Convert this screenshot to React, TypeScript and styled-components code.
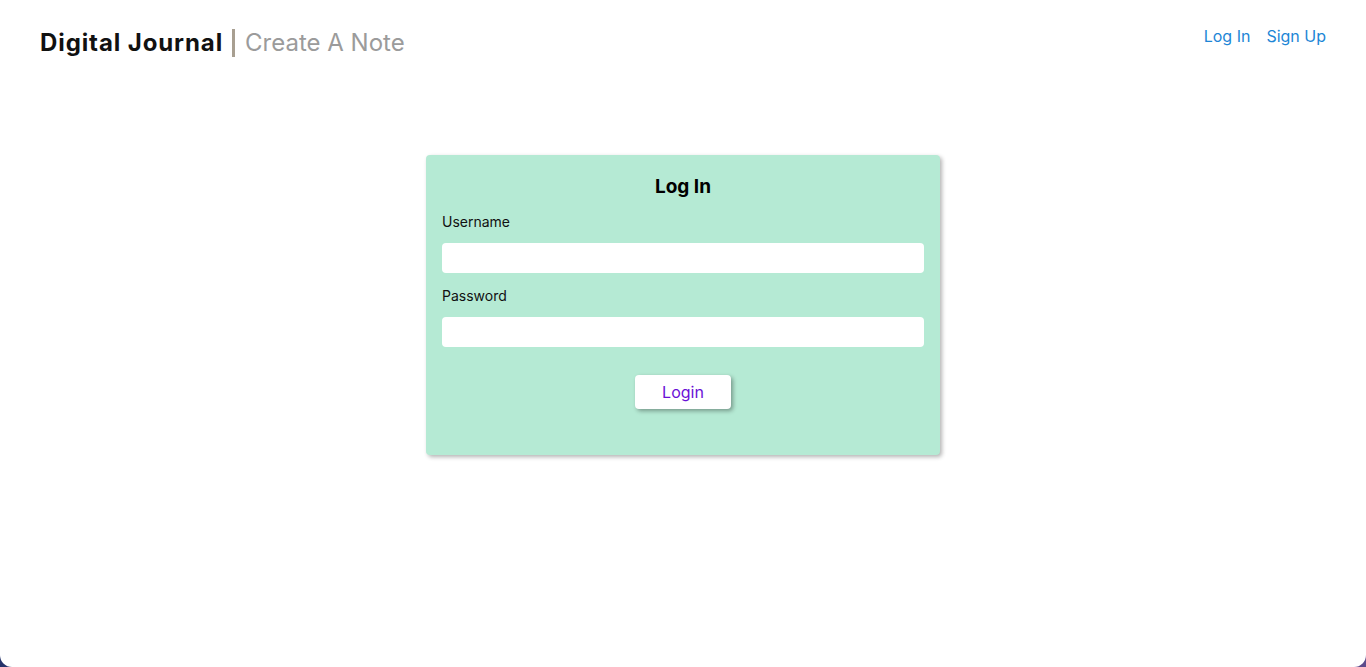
import React from 'react';
import styled, { createGlobalStyle } from 'styled-components';

const GlobalStyle = createGlobalStyle`
  html, body {
    margin: 0;
    padding: 0;
  }
  body {
    background: linear-gradient(to right, #26336a, #5c4b8b);
    font-family: Inter, "Noto Sans", sans-serif;
  }
`;

const App: React.FC = () => {
  return (
    <>
      <GlobalStyle />
      <PageStyle>
        <header className="topbar">
          <div className="brand">
            <span className="name">Digital Journal</span>
            <span className="tagline">Create A Note</span>
          </div>
          <nav className="links">
            <a href="#login">Log In</a>
            <a href="#signup">Sign Up</a>
          </nav>
        </header>
        <main className="content">
          <form className="card" onSubmit={(e) => e.preventDefault()}>
            <h2 className="title">Log In</h2>
            <label className="field">
              <span>Username</span>
              <input type="text" />
            </label>
            <label className="field">
              <span>Password</span>
              <input type="password" />
            </label>
            <div className="actions">
              <button type="submit">Login</button>
            </div>
          </form>
        </main>
      </PageStyle>
    </>
  );
};

const PageStyle = styled.div`
  min-height: 667px;
  box-sizing: border-box;
  background: #fff;
  border-radius: 0 0 12px 12px;

  .topbar {
    display: flex;
    justify-content: space-between;
    align-items: flex-start;
    padding: 26px 40px 0 40px;
  }

  .brand {
    display: flex;
    align-items: center;
    margin-top: 2px;

    .name {
      font-size: 24px;
      font-weight: 700;
      letter-spacing: 0.9px;
      color: #111;
      padding-right: 9px;
    }

    .tagline {
      font-size: 24px;
      color: #9b9b9b;
      border-left: 3px solid #a89f91;
      padding-left: 10px;
      line-height: 28px;
    }
  }

  .links {
    display: flex;
    gap: 16px;

    a {
      color: #1d86d6;
      text-decoration: none;
      font-size: 16px;
    }
  }

  .content {
    display: flex;
    justify-content: center;
    padding-top: 98px;
  }

  .card {
    width: 514px;
    height: 300px;
    box-sizing: border-box;
    padding: 20px 16px 0 16px;
    background: #b5ead4;
    border-radius: 4px;
    box-shadow: 2px 2px 4px rgba(0, 0, 0, 0.3);

    .title {
      margin: 0 0 15px 0;
      text-align: center;
      font-size: 19px;
      line-height: 23px;
      font-weight: 700;
      color: #000;
    }
  }

  .field {
    display: flex;
    flex-direction: column;
    margin-bottom: 14px;

    span {
      font-size: 14px;
      color: #111;
      margin-bottom: 13px;
    }

    input {
      height: 30px;
      box-sizing: border-box;
      border: none;
      border-radius: 4px;
      background: #fff;
      padding: 0 8px;
      font-size: 14px;
      outline: none;
    }
  }

  .actions {
    display: flex;
    justify-content: center;
    padding-top: 14px;

    button {
      width: 96px;
      height: 34px;
      border: none;
      border-radius: 4px;
      background: #fff;
      color: #6a10d6;
      font-family: Inter, sans-serif;
      font-size: 16px;
      box-shadow: 2px 2px 4px rgba(0, 0, 0, 0.35);
      cursor: pointer;
    }
  }
`;

export default App;
